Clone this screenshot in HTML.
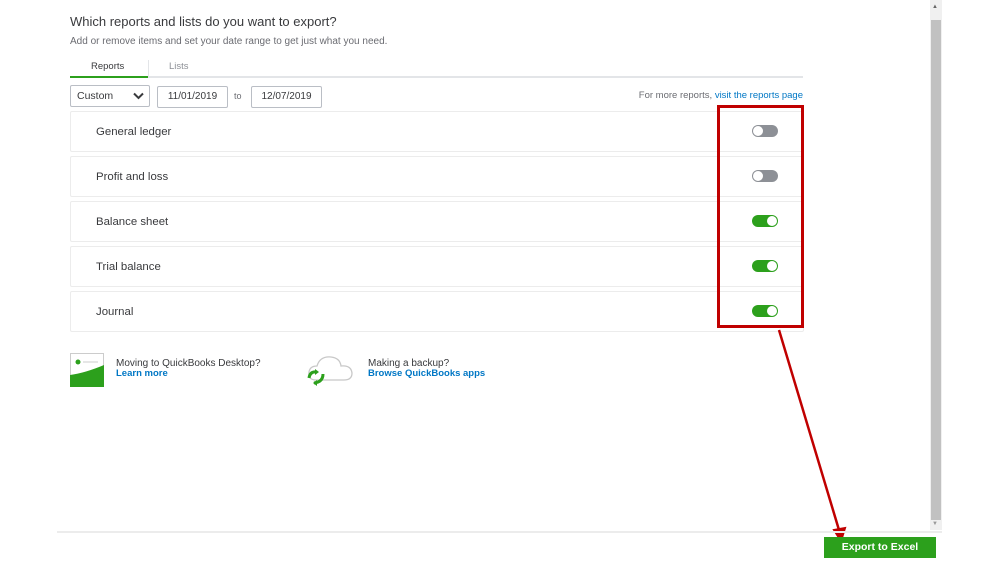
<!DOCTYPE html>
<html><head><style>
body{margin:0;width:999px;height:562px;background:#fff;font-family:"Liberation Sans",sans-serif;position:relative;overflow:hidden;color:#393a3d}
.a{position:absolute}
.row{position:absolute;left:70px;width:732px;height:39px;border:1px solid #ececec;border-radius:2px}
.row span{position:absolute;left:25px;top:14px;font-size:11.4px;color:#393a3d}
.tg{position:absolute;left:681px;top:13px;width:26px;height:12px;border-radius:6px;background:#8d9096}
.tg:after{content:"";position:absolute;left:1px;top:1px;width:10px;height:10px;border-radius:50%;background:#fff}
.tg.on{background:#2ca01c}.tg.on:after{left:15px}
.box{position:absolute;height:20px;border:1px solid #babec5;border-radius:2px;font-size:10px;line-height:20px;color:#393a3d}
</style></head><body>
<div class="a" style="left:70px;top:14px;font-size:13px">Which reports and lists do you want to export?</div>
<div class="a" style="left:70px;top:36px;font-size:10px;color:#6b6c72">Add or remove items and set your date range to get just what you need.</div>
<div class="a" style="left:91px;top:61px;font-size:9.5px">Reports</div>
<div class="a" style="left:169px;top:61px;font-size:9.5px;color:#8d9096">Lists</div>
<div class="a" style="left:148px;top:60px;width:1px;height:16px;background:#e3e5e8"></div>
<div class="a" style="left:70px;top:76px;width:733px;height:2px;background:#e3e5e8"></div>
<div class="a" style="left:70px;top:76px;width:78px;height:2px;background:#2ca01c"></div>
<div class="box" style="left:70px;top:85px;width:78px"><span style="margin-left:6px;font-size:10.5px">Custom</span>
<svg class="a" style="left:62px;top:6px" width="11" height="8"><path d="M1 1.5 5.5 6 10 1.5" stroke="#393a3d" stroke-width="2" fill="none"/></svg></div>
<div class="box" style="left:157px;top:86px;width:69px;text-align:center">11/01/2019</div>
<div class="a" style="left:234px;top:91px;font-size:9px;color:#6b6c72">to</div>
<div class="box" style="left:251px;top:86px;width:69px;text-align:center">12/07/2019</div>
<div class="a" style="right:196px;top:90px;font-size:9.5px;color:#6b6c72">For more reports, <span style="color:#0077c5">visit the reports page</span></div>
<div class="row" style="top:111px"><span>General ledger</span><div class="tg"></div></div>
<div class="row" style="top:156px"><span>Profit and loss</span><div class="tg"></div></div>
<div class="row" style="top:201px"><span>Balance sheet</span><div class="tg on"></div></div>
<div class="row" style="top:246px"><span>Trial balance</span><div class="tg on"></div></div>
<div class="row" style="top:291px"><span>Journal</span><div class="tg on"></div></div>
<div class="a" style="left:717px;top:105px;width:81px;height:217px;border:3px solid #c00000"></div>
<svg class="a" style="left:0;top:0" width="999" height="562"><line x1="779" y1="330" x2="839" y2="530" stroke="#c00000" stroke-width="2.5"/><path d="M834 530 841 541 845 528Z" fill="#c00000" stroke="#c00000" stroke-width="2"/></svg>
<svg class="a" style="left:70px;top:353px" width="34" height="34"><rect x="0.5" y="0.5" width="33" height="33" fill="#fff" stroke="#ccc"/><path d="M0 34V22Q15 20 34 12V34Z" fill="#2ca01c"/><circle cx="8" cy="9" r="2.5" fill="#2ca01c"/><line x1="13" y1="9" x2="28" y2="9" stroke="#ccc"/></svg>
<div class="a" style="left:116px;top:358px;font-size:10px">Moving to QuickBooks Desktop?</div>
<div class="a" style="left:116px;top:368px;font-size:9.5px;font-weight:bold;color:#0077c5">Learn more</div>
<svg class="a" style="left:304px;top:352px" width="52" height="36"><path d="M12 28Q4 28 5 20Q6 14 13 14Q16 4 27 5Q36 6 37 14Q47 13 48 21Q48 28 40 28Z" fill="#fff" stroke="#c8c8c8" stroke-width="1.3"/><path d="M5 26Q6 19 13 20M19 22Q19 30 10 31" fill="none" stroke="#2ca01c" stroke-width="3"/><path d="M11 17 15 20 11 23Z M13 34 9 31 13 28Z" fill="#2ca01c"/></svg>
<div class="a" style="left:368px;top:358px;font-size:10px">Making a backup?</div>
<div class="a" style="left:368px;top:368px;font-size:9.5px;font-weight:bold;color:#0077c5">Browse QuickBooks apps</div>
<div class="a" style="left:930px;top:0;width:12px;height:530px;background:#f0f0f0"></div>
<div class="a" style="left:931px;top:20px;width:10px;height:500px;background:#c1c1c1"></div>
<div class="a" style="left:932px;top:4px;font-size:6px;color:#666">▲</div>
<div class="a" style="left:932px;top:521px;font-size:6px;color:#999">▼</div>
<div class="a" style="left:57px;top:531px;width:885px;height:2px;background:#ececec"></div>
<div class="a" style="left:824px;top:537px;width:112px;height:21px;background:#2ca01c;color:#fff;font-size:10.5px;font-weight:bold;text-align:center;line-height:21px">Export to Excel</div>
</body></html>
